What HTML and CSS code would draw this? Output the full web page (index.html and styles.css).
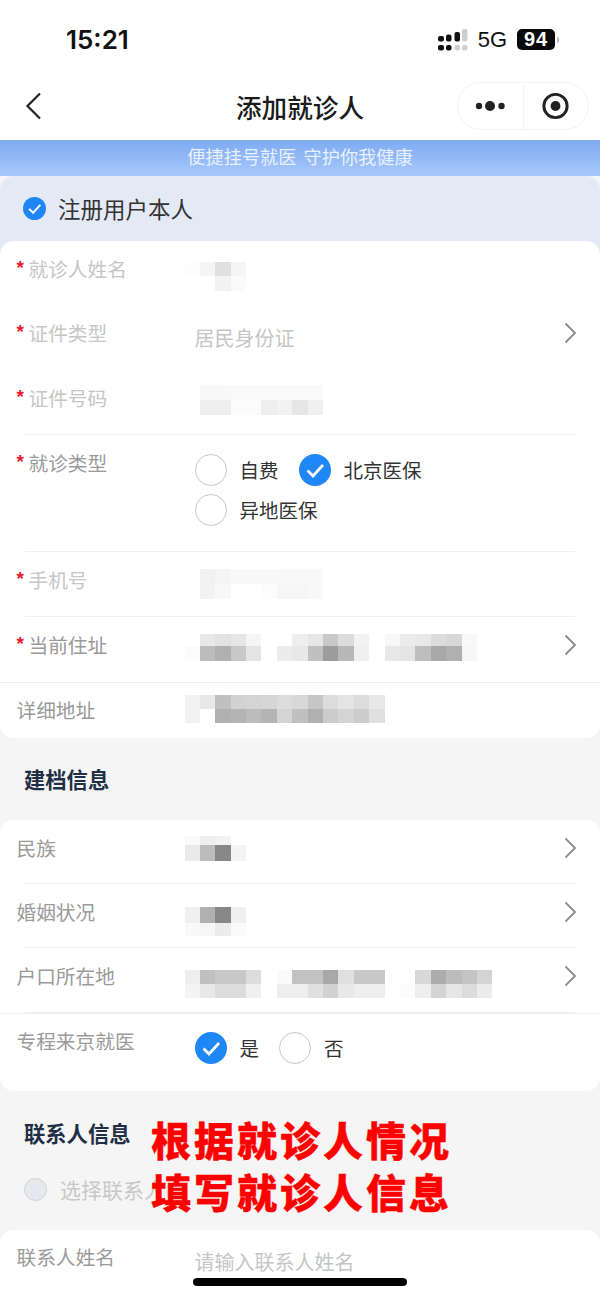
FILE: index.html
```html
<!DOCTYPE html>
<html lang="zh-CN">
<head>
    <meta charset="UTF-8">
    <meta name="viewport" content="width=device-width, initial-scale=1.0">
    <title>添加就诊人</title>
    <link rel="stylesheet" href="styles.css">
</head>
<body>
    <div class="status-bar">
        <span class="time">15:21</span>
        <div class="status-right">
            <svg class="signal" width="32" height="22" viewBox="0 0 32 22">
                <rect x="1" y="7" width="6" height="5.5" rx="2" fill="#111"/>
                <rect x="9" y="5.5" width="5.5" height="7" rx="2" fill="#111"/>
                <rect x="17.5" y="3" width="5.5" height="9.5" rx="2" fill="#111"/>
                <rect x="25" y="0" width="5.5" height="12.5" rx="2" fill="#cfcfcf"/>
                <rect x="1" y="16" width="6" height="5.5" rx="2" fill="#111"/>
                <rect x="9" y="16" width="5.5" height="5.5" rx="2" fill="#111"/>
                <rect x="17.5" y="16" width="5.5" height="5.5" rx="2" fill="#cfcfcf"/>
                <rect x="25" y="16" width="5.5" height="5.5" rx="2" fill="#cfcfcf"/>
            </svg>
            <span class="network">5G</span>
            <span class="battery">94</span>
            <span class="battery-nub"></span>
        </div>
    </div>

    <header class="nav">
        <svg class="back" width="17" height="28" viewBox="0 0 17 28">
            <path d="M15 1.5 L2.5 14 L15 26.5" fill="none" stroke="#222" stroke-width="2.2"/>
        </svg>
        <h1>添加就诊人</h1>
        <div class="capsule">
            <svg width="65" height="46" viewBox="0 0 65 46">
                <circle cx="21" cy="23" r="3.2" fill="#222"/>
                <circle cx="32" cy="23" r="5" fill="#222"/>
                <circle cx="43.5" cy="23" r="3.2" fill="#222"/>
            </svg>
            <svg class="capsule-target" width="65" height="46" viewBox="0 0 65 46">
                <circle cx="32" cy="23" r="11.8" fill="none" stroke="#222" stroke-width="3"/>
                <circle cx="32" cy="23" r="5" fill="#222"/>
            </svg>
        </div>
    </header>

    <div class="banner">便捷挂号就医 守护你我健康</div>

    <div class="user-row">
        <svg width="23" height="23" viewBox="0 0 32 32">
            <circle cx="16" cy="16" r="16" fill="#1f87f5"/>
            <path d="M8.5 16.5 L14 22 L24 11" fill="none" stroke="#fff" stroke-width="2.8"/>
        </svg>
        <span>注册用户本人</span>
    </div>

    <section class="card card-first">
        <div class="row row-short">
            <div class="label label-faint"><span class="star">*</span>就诊人姓名</div>
            <div class="mosaic" data-top="7" data-h="14,15" data-cells="fd f5 e0 f5|ff ff f2 fa"></div>
        </div>
        <div class="row">
            <div class="label label-faint"><span class="star">*</span>证件类型</div>
            <div class="value">居民身份证</div>
            <svg class="chevron" width="13" height="22" viewBox="0 0 13 22"><path d="M1.5 1.5 L11 11 L1.5 20.5" fill="none" stroke="#8c8c8c" stroke-width="1.8"/></svg>
        </div>
        <div class="row line">
            <div class="label label-faint"><span class="star">*</span>证件号码</div>
            <div class="mosaic" data-top="1" data-h="15,15" data-cells="ff f8 f8 fa fa fa fa fa fa|ff ee ee fb fb ee f2 e6 f0"></div>
        </div>
        <div class="row row-tall line">
            <div class="label"><span class="star">*</span>就诊类型</div>
            <div class="radios">
                <div class="radio"><span class="circle"></span>自费</div>
                <div class="radio">
                    <svg width="32" height="32" viewBox="0 0 32 32"><circle cx="16" cy="16" r="16" fill="#1f87f5"/><path d="M8.5 16.5 L14 22 L24 11" fill="none" stroke="#fff" stroke-width="2.8"/></svg>
                    北京医保
                </div>
                <div class="radio"><span class="circle"></span>异地医保</div>
            </div>
        </div>
        <div class="row line">
            <div class="label label-faint"><span class="star">*</span>手机号</div>
            <div class="mosaic" data-top="3" data-h="15,15" data-cells="ff f2 f5 f9 f9 f9 f8 f8 f8|ff f2 f8 ff ff fc f6 f6 f8"></div>
        </div>
        <div class="row">
            <div class="label"><span class="star">*</span>当前住址</div>
            <div class="mosaic" data-top="3" data-h="12,15" data-cells="ff e8 e2 e6 f5 ff ff ee e6 c8 dc f2 ff f8 ec e8 dc d8 f8|fb bc b0 c8 e4 ff ec e8 c0 9c b8 f0 ff e8 e4 be a8 b0 f6"></div>
            <svg class="chevron" width="13" height="22" viewBox="0 0 13 22"><path d="M1.5 1.5 L11 11 L1.5 20.5" fill="none" stroke="#8c8c8c" stroke-width="1.8"/></svg>
        </div>
        <div class="row row-last">
            <div class="label">详细地址</div>
            <div class="mosaic" data-top="-1" data-h="14,14" data-cells="f2 e8 c0 d2 d4 d6 dc d8 c6 dc e4 dc e8|f2 ff b0 b4 bc b4 d4 c0 b0 cc d4 cc e0"></div>
        </div>
    </section>

    <h2 class="section-title">建档信息</h2>

    <section class="card">
        <div class="row row-short line">
            <div class="label">民族</div>
            <div class="mosaic" data-top="2" data-h="9,16" data-cells="fa ee f2 ff|ea bc 88 f4"></div>
            <svg class="chevron" width="13" height="22" viewBox="0 0 13 22"><path d="M1.5 1.5 L11 11 L1.5 20.5" fill="none" stroke="#8c8c8c" stroke-width="1.8"/></svg>
        </div>
        <div class="row row-short line">
            <div class="label">婚姻状况</div>
            <div class="mosaic" data-top="9" data-h="16,13" data-cells="f0 b0 88 f0|f9 f6 ec fa"></div>
            <svg class="chevron" width="13" height="22" viewBox="0 0 13 22"><path d="M1.5 1.5 L11 11 L1.5 20.5" fill="none" stroke="#8c8c8c" stroke-width="1.8"/></svg>
        </div>
        <div class="row line">
            <div class="label">户口所在地</div>
            <div class="mosaic" data-top="8" data-h="14,14" data-cells="ee c0 c8 c8 dc ff fa c2 c2 a8 e0 c8 c8 ff ff d8 ac bc c4 d4|f4 e8 dc dc f0 ff ee ee e0 d2 e8 ee ee ff fc ee d4 e6 dc ec"></div>
            <svg class="chevron" width="13" height="22" viewBox="0 0 13 22"><path d="M1.5 1.5 L11 11 L1.5 20.5" fill="none" stroke="#8c8c8c" stroke-width="1.8"/></svg>
        </div>
        <div class="row row-yesno">
            <div class="label">专程来京就医</div>
            <div class="radios">
                <div class="radio">
                    <svg width="32" height="32" viewBox="0 0 32 32"><circle cx="16" cy="16" r="16" fill="#1f87f5"/><path d="M8.5 16.5 L14 22 L24 11" fill="none" stroke="#fff" stroke-width="2.8"/></svg>
                    是
                </div>
                <div class="radio"><span class="circle"></span>否</div>
            </div>
        </div>
    </section>

    <div class="contact-head">
        <h2 class="contact-title">联系人信息</h2>
        <div class="contact-pick"><span class="pick-circle"></span><span>选择联系人</span></div>
    </div>

    <section class="card card-bottom">
        <div class="row">
            <div class="label">联系人姓名</div>
            <div class="value">请输入联系人姓名</div>
        </div>
    </section>

    <div class="notice">根据就诊人情况<br>填写就诊人信息</div>
    <div class="home-bar"></div>

    <script src="mosaic.js"></script>
</body>
</html>
```

FILE: styles.css
```css
* {
    box-sizing: border-box;
}

html, body {
    margin: 0;
    padding: 0;
}

body {
    position: relative;
    height: 1298px;
    overflow: hidden;
    background-color: #f5f5f5;
    font-family: "Noto Sans CJK SC", "Liberation Sans", sans-serif;
}

.status-bar {
    display: flex;
    justify-content: space-between;
    height: 72px;
    padding: 21px 41px 0 66px;
    background-color: #fff;
}

.time {
    font-family: Inter, "Liberation Sans", sans-serif;
    font-size: 26px;
    font-weight: 600;
    line-height: 38px;
    color: #111;
}

.status-right {
    display: flex;
    align-items: flex-start;
}

.signal {
    margin-top: 8px;
}

.network {
    margin-left: 9px;
    font-family: "Liberation Sans", sans-serif;
    font-size: 22px;
    line-height: 38px;
    color: #111;
}

.battery {
    width: 38px;
    height: 21px;
    margin-top: 8px;
    margin-left: 10px;
    border-radius: 5px;
    background-color: #0a0a0a;
    color: #fff;
    font-family: "Liberation Sans", sans-serif;
    font-size: 20px;
    font-weight: 700;
    line-height: 21px;
    letter-spacing: 1px;
    text-align: center;
}

.battery-nub {
    width: 2px;
    height: 6px;
    margin-top: 16px;
    margin-left: 2px;
    border-radius: 0 2px 2px 0;
    background-color: #bbb;
}

.nav {
    display: grid;
    grid-template-columns: 1fr auto 1fr;
    align-items: center;
    height: 68px;
    padding: 0 11px;
    background-color: #fff;
}

.back {
    margin-left: 14px;
}

.nav h1 {
    margin: 0;
    font-size: 25.6px;
    font-weight: 500;
    color: #1a1a1a;
}

.capsule {
    display: flex;
    justify-self: end;
    width: 132px;
    height: 48px;
    border: 1px solid #f3f3f3;
    border-radius: 24px;
}

.capsule-target {
    border-left: 1px solid #f3f3f3;
}

.banner {
    height: 36px;
    background: linear-gradient(#7dabf3, #a8c8f9);
    color: #e8f1ff;
    font-size: 18.2px;
    line-height: 33px;
    word-spacing: 3px;
    text-align: center;
}

.user-row {
    display: flex;
    align-items: center;
    gap: 12px;
    height: 79px;
    padding: 0 0 15px 23px;
    border-radius: 14px 14px 0 0;
    background-color: #e3eaf5;
    font-size: 22.5px;
    color: #333;
}

.card {
    border-radius: 14px;
    background-color: #fff;
}

.card-first {
    margin-top: -14px;
}

.card-bottom {
    height: 80px;
    border-radius: 14px 14px 0 0;
}

.card-bottom .row {
    padding-top: 13px;
}

.row {
    position: relative;
    display: flex;
    align-items: flex-start;
    height: 65px;
    padding: 14px 23px 0 17px;
}

.row-short {
    height: 64px;
}

.row-tall {
    height: 117px;
}

.row-last {
    height: 56px;
    border-top: 1px solid #ececec;
    padding-top: 13px;
}

.row-yesno {
    height: 78px;
    border-top: 1px solid #f0f0f0;
    padding-top: 13px;
}

.line::after {
    content: "";
    position: absolute;
    left: 25px;
    right: 25px;
    bottom: 0;
    height: 1px;
    background-color: #f0f0f0;
}

.label {
    flex: 0 0 168px;
    margin-left: -0.5px;
    font-size: 19.7px;
    line-height: 27px;
    color: #9a9a9a;
}

.label-faint {
    color: #c6c6c6;
}

.star {
    display: inline-block;
    width: 12px;
    color: #e8192f;
    font-family: "Liberation Sans", sans-serif;
    font-size: 19px;
    font-weight: 700;
    line-height: 20px;
    vertical-align: 3px;
}

.value {
    margin-top: 5px;
    padding-left: 10px;
    font-size: 20px;
    line-height: 28px;
    color: #c6c6c6;
}

.chevron {
    margin-top: 3px;
    margin-left: auto;
}

.radios {
    display: flex;
    flex-wrap: wrap;
    gap: 8px 20px;
    width: 300px;
    margin-top: 5px;
    padding-left: 10px;
}

.radio {
    display: flex;
    align-items: center;
    gap: 13px;
    font-size: 19.5px;
    line-height: 32px;
    color: #333;
}

.circle {
    width: 32px;
    height: 32px;
    border: 1.5px solid #c8c8c8;
    border-radius: 50%;
}

.section-title {
    height: 82px;
    margin: 0;
    padding-left: 24px;
    font-size: 21.3px;
    font-weight: 700;
    line-height: 82px;
    color: #1f2f45;
}

.contact-head {
    height: 139px;
    padding: 27px 0 0 24px;
}

.contact-title {
    margin: 0;
    font-size: 21.3px;
    font-weight: 700;
    line-height: 29px;
    color: #1f2f45;
}

.contact-pick {
    display: flex;
    align-items: center;
    gap: 13px;
    margin-top: 28px;
    font-size: 21px;
    line-height: 28px;
    color: #c8c8c8;
}

.pick-circle {
    width: 23px;
    height: 23px;
    border: 1.5px solid #d2d2d2;
    border-radius: 50%;
    background-color: #e6e8ee;
}

/* red caption laid over the form */
.notice {
    position: absolute;
    left: 151px;
    top: 1113px;
    color: #f00;
    font-size: 40px;
    font-weight: 900;
    line-height: 52px;
    letter-spacing: 3px;
    -webkit-text-stroke: 0.4px #f00;
}

.home-bar {
    position: absolute;
    left: 193px;
    top: 1278px;
    width: 214px;
    height: 8px;
    border-radius: 4px;
    background-color: #000;
}
```

FILE: mosaic.js
```js
// pixelated blocks that hide personal data
document.querySelectorAll('.mosaic').forEach((block) => {
    const heights = block.dataset.h.split(',');
    block.style.marginTop = block.dataset.top + 'px';

    block.dataset.cells.split('|').forEach((row, i) => {
        const rowEl = document.createElement('div');
        rowEl.style.display = 'flex';
        rowEl.style.height = heights[i] + 'px';

        row.split(' ').forEach((grey) => {
            const cell = document.createElement('div');
            cell.style.width = '15.4px';
            cell.style.background = `#${grey}${grey}${grey}`;
            rowEl.appendChild(cell);
        });

        block.appendChild(rowEl);
    });
});
```
